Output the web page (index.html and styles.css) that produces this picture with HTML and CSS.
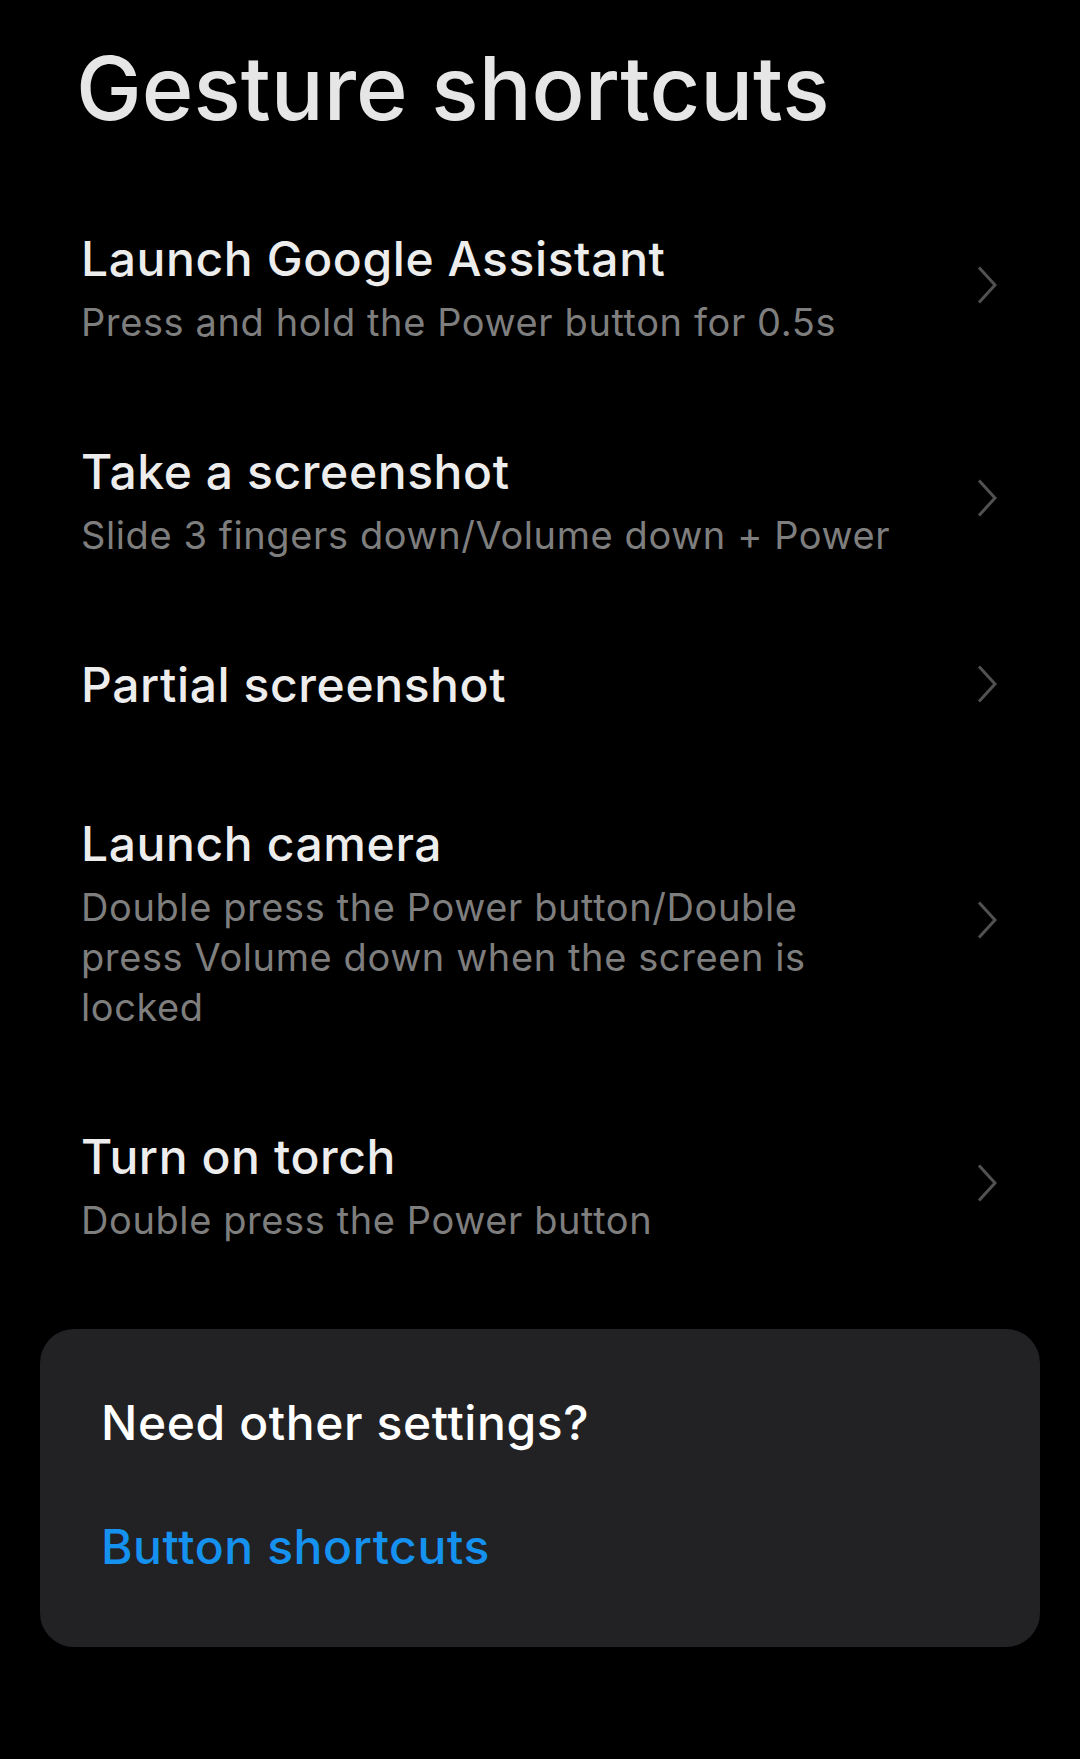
FILE: index.html
```html
<!DOCTYPE html>
<html lang="en">
<head>
  <meta charset="utf-8">
  <meta name="viewport" content="width=device-width, initial-scale=1">
  <title>Gesture shortcuts</title>
  <link rel="stylesheet" href="styles.css">
</head>
<body>
  <h1 class="page-title">Gesture shortcuts</h1>

  <ul class="settings-list">
    <li class="setting">
      <div class="setting-text">
        <div class="setting-title">Launch Google Assistant</div>
        <div class="setting-summary">Press and hold the Power button for 0.5s</div>
      </div>
      <svg class="chevron" viewBox="0 0 20 38"><polyline points="2,1.5 18,19 2,36.5"/></svg>
    </li>
    <li class="setting">
      <div class="setting-text">
        <div class="setting-title">Take a screenshot</div>
        <div class="setting-summary">Slide 3 fingers down/Volume down + Power</div>
      </div>
      <svg class="chevron" viewBox="0 0 20 38"><polyline points="2,1.5 18,19 2,36.5"/></svg>
    </li>
    <li class="setting">
      <div class="setting-text">
        <div class="setting-title">Partial screenshot</div>
      </div>
      <svg class="chevron" viewBox="0 0 20 38"><polyline points="2,1.5 18,19 2,36.5"/></svg>
    </li>
    <li class="setting">
      <div class="setting-text">
        <div class="setting-title">Launch camera</div>
        <div class="setting-summary">Double press the Power button/Double press Volume down when the screen is locked</div>
      </div>
      <svg class="chevron" viewBox="0 0 20 38"><polyline points="2,1.5 18,19 2,36.5"/></svg>
    </li>
    <li class="setting">
      <div class="setting-text">
        <div class="setting-title">Turn on torch</div>
        <div class="setting-summary">Double press the Power button</div>
      </div>
      <svg class="chevron" viewBox="0 0 20 38"><polyline points="2,1.5 18,19 2,36.5"/></svg>
    </li>
  </ul>

  <div class="more-card">
    <div class="more-title">Need other settings?</div>
    <a class="more-link" href="#">Button shortcuts</a>
  </div>
</body>
</html>
```

FILE: styles.css
```css
body {
  margin: 0;
  background: #000;
  font-family: Inter, Roboto, sans-serif;
  color: #ececec;
}
.page-title {
  margin: 35px 0 0;
  padding-left: 76px;
  font-size: 88px;
  line-height: 106px;
  font-weight: 500;
  color: #e6e6e6;
}
.settings-list {
  list-style: none;
  margin: 39px 0 0;
  padding: 0;
}
.setting {
  display: flex;
  align-items: center;
  padding: 45px 83px 46px 81px;
}
.setting-text {
  flex: 1;
  padding-right: 72px;
}
.setting-title {
  font-size: 48px;
  line-height: 68px;
  font-weight: 500;
  letter-spacing: 0.6px;
  color: #ededed;
}
.setting-summary {
  margin-top: 4px;
  font-size: 38px;
  line-height: 50px;
  letter-spacing: 0.6px;
  color: #7e7e7e;
}
.chevron {
  width: 20px;
  height: 38px;
  margin-top: -3px;
  fill: none;
  stroke: #515151;
  stroke-width: 3;
}
.more-card {
  margin: 38px 40px 0;
  padding: 60px 61px 66px;
  background: #222224;
  border-radius: 34px;
}
.more-title {
  font-size: 48px;
  line-height: 68px;
  font-weight: 500;
  letter-spacing: 0.6px;
  color: #fff;
}
.more-link {
  display: block;
  margin-top: 56px;
  font-size: 48px;
  line-height: 68px;
  font-weight: 500;
  letter-spacing: 0.6px;
  color: #1592f0;
  text-decoration: none;
}
```
